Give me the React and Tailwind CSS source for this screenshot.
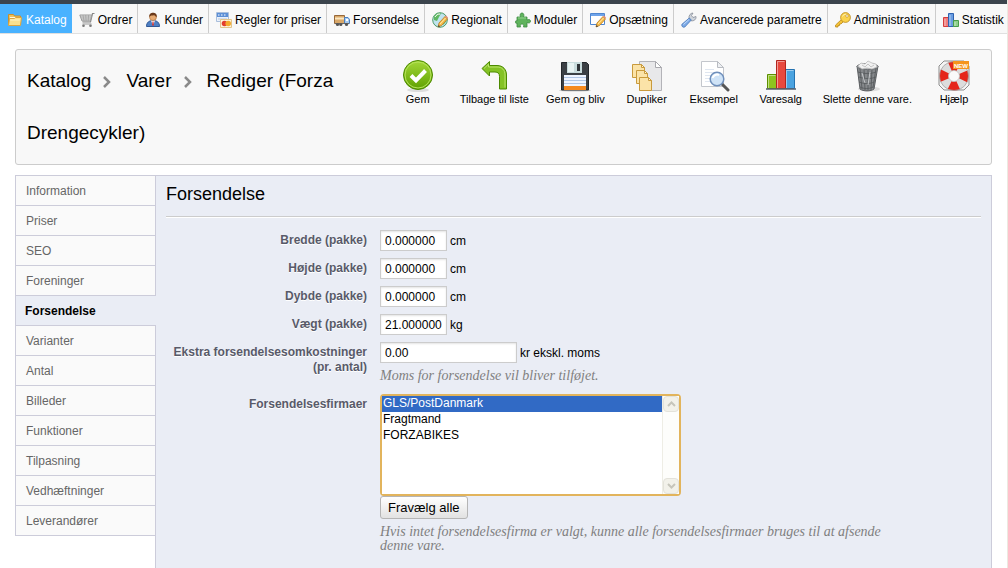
import React, { useState } from "react";

/* ---------- small menu icons (16px) ---------- */

const FolderIcon = () => (
  <svg width="16" height="16" viewBox="0 0 16 16" className="shrink-0">
    <path d="M1.5 12.5v-10h5l1 1.5h6v8.5z" fill="#f0c25a" stroke="#c98f2b" />
    <path d="M3 5h10v3H3z" fill="#fff8dc" />
    <path d="M1.5 13.5l1-7h5l1-1h6l-1 8z" fill="#fbe08e" stroke="#d9a441" />
    <path d="M3.2 8h9.6" stroke="#fff4c8" />
  </svg>
);

const CartIcon = () => (
  <svg width="16" height="16" viewBox="0 0 16 16" className="shrink-0">
    <path d="M15.5 1.5h-2l-2 8.5h-8" fill="none" stroke="#888" strokeWidth="1.2" />
    <path d="M.8 3h12l-1.5 6H3z" fill="#dedede" stroke="#999" />
    <path d="M2 5h10M2.6 7h9M4 3l1 6M6.7 3l.4 6M9.6 3l-.4 6" stroke="#a0a0a0" strokeWidth=".8" />
    <path d="M3.5 12h9" stroke="#999" />
    <circle cx="4.5" cy="13.8" r="1.3" fill="#777" />
    <circle cx="11.5" cy="13.8" r="1.3" fill="#777" />
  </svg>
);

const UserIcon = () => (
  <svg width="16" height="16" viewBox="0 0 16 16" className="shrink-0">
    <path d="M1.5 14.5c0-4 2.5-6 6.5-6s6.5 2 6.5 6z" fill="#4f80c4" stroke="#2f5796" />
    <path d="M6 8.5l2 5 2-5z" fill="#fff" />
    <path d="M7.5 9.500h1l.5 4h-2z" fill="#c33" />
    <circle cx="8" cy="5" r="3.5" fill="#e7ab73" stroke="#a86a35" strokeWidth=".6" />
    <path d="M4.300 5C4 2 6 .700 8 .700s4.200 1.300 3.700 4.300C10.500 4.800 10 3.500 9 3.300 7 3.500 5.500 3.500 4.300 5z" fill="#6b3a1b" />
  </svg>
);

const PriceRulesIcon = () => (
  <svg width="16" height="16" viewBox="0 0 16 16" className="shrink-0">
    <path d="M.5.5h12v9H.5z" fill="#e9f0fa" stroke="#a9bedb" />
    <path d="M1 1h11v4H1z" fill="#5c8fd6" />
    <path d="M2 3h1.500M5 3h1.500M8 3h1.500" stroke="#fff" />
    <path d="M2 7h9" stroke="#b7c7dd" />
    <path d="M4.500 7.500h11v8h-11z" fill="#fdf4dd" stroke="#e2c48b" />
    <circle cx="8.500" cy="11.500" r="2.800" fill="#e33d2e" />
    <circle cx="12.200" cy="11.500" r="2.800" fill="#f4ab2d" />
  </svg>
);

const TruckIcon = () => (
  <svg width="16" height="16" viewBox="0 0 16 16" className="shrink-0">
    <path d="M.5 3.500h10v8H.5z" fill="#d9a869" stroke="#96683a" />
    <path d="M1 6.500h9" stroke="#fbe6c0" strokeWidth="2" />
    <path d="M10.500 5.500h3.500l1.500 2v4h-5z" fill="#a9cbee" stroke="#4a7fc0" />
    <path d="M12 7h2v2h-2z" fill="#fff" />
    <path d="M1 11.500h14" stroke="#666" />
    <circle cx="3.500" cy="12.500" r="1.600" fill="#555" />
    <circle cx="6.800" cy="12.500" r="1.600" fill="#555" />
    <circle cx="12.500" cy="12.500" r="1.600" fill="#555" />
  </svg>
);

const Pencil = () => (
  <g>
    <path d="M6 15l1-4 6-6.500 2.500 2.500-6 6.500z" fill="#f7bd4c" stroke="#b9781d" strokeWidth=".8" />
    <path d="M8 12l5.500-6" stroke="#ffe7a6" />
    <path d="M13 4.500l1-1 2 2-.8 1.200z" fill="#e78d7c" />
    <path d="M6 15l.6-2 1.500 1.400z" fill="#444" />
  </g>
);

const GlobeIcon = () => (
  <svg width="16" height="16" viewBox="0 0 16 16" className="shrink-0">
    <circle cx="8" cy="8" r="7.300" fill="#bfe3ee" stroke="#4d9a68" />
    <path d="M2 4c2-2.500 5-3.500 7-2.500L7 5 5 9l-3-1zM9 9l5-4c1 3 0 6-3 8z" fill="#5fb862" />
    <path d="M3 5c1-2 3-3 5-3" fill="none" stroke="#fff" />
    <Pencil />
  </svg>
);

const PuzzleIcon = () => (
  <svg width="16" height="16" viewBox="0 0 16 16" className="shrink-0">
    <path
      d="M2 5h3.500C4.500 2.500 5.500 1 7 1s2.500 1.500 1.500 4H12v3c2-1 3.500-.3 3.500 1.200S14 11.500 12 10.500V15H8.500c.8-2-.2-3-1.500-3s-2.300 1-1.500 3H2v-4c-1 .6-1.700 0-1.700-1S1 8.500 2 9z"
      fill="#5fb35c"
      stroke="#3c8a41"
      strokeWidth=".8"
    />
    <path d="M3 6h8" stroke="#96d590" />
  </svg>
);

const PreferencesIcon = () => (
  <svg width="16" height="16" viewBox="0 0 16 16" className="shrink-0">
    <path d="M.5 1.500h14v11H.5z" fill="#fff" stroke="#4f86d0" />
    <path d="M1 2h13v2H1z" fill="#6ea3ea" />
    <Pencil />
  </svg>
);

const WrenchIcon = () => (
  <svg width="16" height="16" viewBox="0 0 16 16" className="shrink-0">
    <path d="M8 6.500c-.5-3 1.500-5.500 4-5.500l-1.500 2.500 1.500 2 3-1c.5 2.500-2 5-5 4.200z" fill="#cfd4db" stroke="#868d98" strokeWidth=".8" />
    <path d="M8.300 6l2 2-6.500 7c-1.500 1-3.800-.8-2.800-2.800z" fill="#7ba9e6" stroke="#4676b8" strokeWidth=".8" />
    <path d="M2.500 12.500l5.500-5" stroke="#c4dcfa" />
  </svg>
);

const KeyIcon = () => (
  <svg width="16" height="16" viewBox="0 0 16 16" className="shrink-0">
    <path d="M7 7l2 2-3 3H4.500v1.500H3V15H.6v-2z" fill="#f5c437" stroke="#b98516" strokeWidth=".8" />
    <circle cx="10.500" cy="5.500" r="4.900" fill="#fbd34d" stroke="#b98516" strokeWidth=".8" />
    <path d="M7.500 4.500c.7-2 2.500-2.500 4-2" fill="none" stroke="#fff2b5" />
    <circle cx="12" cy="4" r="1.300" fill="#fff" stroke="#b98516" strokeWidth=".6" />
  </svg>
);

const StatsIcon = () => (
  <svg width="16" height="16" viewBox="0 0 16 16" className="shrink-0">
    <path d="M.5 5.500h5v9h-5z" fill="#f07d7d" stroke="#d53b3b" />
    <path d="M5.500 1.500h5v13h-5z" fill="#6a9de2" stroke="#2f62b0" />
    <path d="M10.500 8.500h5v6h-5z" fill="#8dcf8a" stroke="#4a9d4a" />
    <path d="M2 7v7M7 3v11M12 10v4" stroke="#fff" strokeOpacity=".5" />
  </svg>
);

/* ---------- toolbar icons (32px) ---------- */

const SaveIcon = () => (
  <svg width="32" height="32" viewBox="0 0 32 32">
    <defs>
      <linearGradient id="save" x1="0" y1="0" x2="0" y2="1">
        <stop offset="0" stopColor="#a3d839" />
        <stop offset="1" stopColor="#5fa000" />
      </linearGradient>
    </defs>
    <ellipse cx="16" cy="30" rx="11" ry="2" fill="#ddd" />
    <circle cx="16" cy="15" r="14.500" fill="url(#save)" stroke="#4c8a00" />
    <circle cx="16" cy="15" r="13" fill="none" stroke="#b6e25c" />
    <path d="M9 15.500l5 5 9.500-10" fill="none" stroke="#fff" strokeWidth="4" />
  </svg>
);

const BackIcon = () => (
  <svg width="32" height="32" viewBox="0 0 32 32">
    <path
      d="M4 8.500l7.500-7v4H19c6 0 9.500 4 9.500 9.500V29h-7V16.500c0-3-1.500-4.500-4.500-4.500h-5.500v4z"
      fill="#84c225"
      stroke="#4c8a00"
      strokeLinejoin="round"
    />
    <path d="M6 8.500l4.500-4.300V7H19c5 0 8 3 8 8v12.500" fill="none" stroke="#b9e36a" />
  </svg>
);

const FloppyIcon = () => (
  <svg width="32" height="32" viewBox="0 0 32 32">
    <ellipse cx="16" cy="30.500" rx="16" ry="1" fill="#ccc" />
    <path d="M2.500 2.500h25l2 2V30h-27z" fill="#3b4045" stroke="#23272b" />
    <path d="M8 2h15v11H8z" fill="#c9dcdd" />
    <path d="M9 3h6v9H9z" fill="#e8f3f3" />
    <path d="M18 4h3v7h-3z" fill="#2f3438" />
    <path d="M5 15h22v11H5z" fill="#eef4ff" />
    <path d="M5 17.500h22M5 20.500h22M5 23.500h22" stroke="#afc6e6" />
    <path d="M5 26h22v4H5z" fill="#f58a1f" />
  </svg>
);

const DuplicateIcon = () => (
  <svg width="32" height="32" viewBox="0 0 32 32">
    <path d="M8.500 1.500h16l6 6v23h-22z" fill="#e8e8ea" stroke="#b3b3b8" />
    <path d="M24.500 1.500v6h6z" fill="#fff" stroke="#a8a8ad" />
    <g fill="#fbe3a8" stroke="#c99a3c">
      <path d="M1.500 4.500h9l3 3v10h-12z" />
      <path d="M5.500 10.500h8l3 3v10h-11z" />
      <path d="M8.500 17.500h9l3 3v10h-12z" />
    </g>
    <g fill="#fff7dd" stroke="#c99a3c">
      <path d="M10.500 4.500v3h3z" />
      <path d="M13.500 10.500v3h3z" />
      <path d="M17.500 17.500v3h3z" />
    </g>
  </svg>
);

const PreviewIcon = () => (
  <svg width="32" height="32" viewBox="0 0 32 32">
    <path d="M3.500 1.500h16l6 6v19h-22z" fill="#fff" stroke="#c3c6cc" />
    <path d="M19.500 1.500v6h6z" fill="#eef0f3" stroke="#b9bcc2" />
    <path d="M7 9.500h9M7 12.500h14M7 15.500h6M7 18.500h5M7 21.500h6" stroke="#dfe6f0" />
    <path d="M24 24l6 6" stroke="#555" strokeWidth="3" strokeLinecap="round" />
    <circle cx="19" cy="19" r="6.800" fill="#cfe3f7" stroke="#6f8fbb" strokeWidth="1.500" />
    <path d="M14.500 18c1-3 4-4 6.500-3" fill="none" stroke="#fff" strokeWidth="2" />
  </svg>
);

const SalesIcon = () => (
  <svg width="32" height="32" viewBox="0 0 32 32">
    <path d="M2.500 14.500h9v14h-9z" fill="#8fc31f" stroke="#5b8f00" />
    <path d="M20.500 9.500h9v19h-9z" fill="#4ba3e0" stroke="#2472b0" />
    <path d="M11.500.5h9v28h-9z" fill="#e8493f" stroke="#b3241d" />
    <path d="M3.500 28V15.500h7M12.500 28V1.500h7M21.500 28V10.500h7" fill="none" stroke="#fff" strokeOpacity=".45" />
    <path d="M1 29h30" stroke="#56606c" strokeWidth="1.500" />
  </svg>
);

const TrashIcon = () => (
  <svg width="32" height="32" viewBox="0 0 32 32">
    <ellipse cx="18" cy="29" rx="11" ry="2.500" fill="#ddd" />
    <path d="M6 6l3 23c3 2.500 11 2.500 14 0l4-23z" fill="#85888b" stroke="#5b5e61" />
    <path
      d="M9 9l2 20M13 9l1 21M17 10v20M21 9l-1 21M25 8l-3 20M7 12c6 2 13 2 18 0M8 17c6 2 12 2 17 0M8 22c5 2 11 2 15 0M9 27c4 2 9 2 13 0"
      fill="none"
      stroke="#54585b"
      strokeWidth=".8"
    />
    <path d="M11 13l3 10M19 12l-2 13" stroke="#c4c7c9" />
    <ellipse cx="16.500" cy="6.500" rx="10.500" ry="3" fill="#b8babc" stroke="#6c6f72" />
    <path d="M7 6l3-3 4 1 3-3 4 2 4 1 1 3-5 2-5-1-5 1z" fill="#f1f1f1" stroke="#b5b5b5" strokeWidth=".7" />
    <path d="M11 5l3 2 3-3 3 3 3-2" fill="none" stroke="#c4c4c4" />
  </svg>
);

const HelpIcon = () => (
  <svg width="32" height="32" viewBox="0 0 32 32">
    <path d="M6 1h20l5 5v19l-5 5H6l-5-5V6z" fill="#f4f4f4" stroke="#8d8d8d" />
    <circle cx="16" cy="16" r="10" fill="none" stroke="#dcdcdc" strokeWidth="9" />
    <circle cx="16" cy="16" r="10" fill="none" stroke="#e5261b" strokeWidth="9" strokeDasharray="8.700 7.008" strokeDashoffset="4.350" />
    <circle cx="16" cy="16" r="14.500" fill="none" stroke="#9b9b9b" strokeWidth=".7" />
    <circle cx="16" cy="16" r="5.500" fill="#fafafa" stroke="#b4b4b4" strokeWidth=".7" />
    <path d="M15 1h16v8H15z" fill="#f5941d" />
    <text x="16" y="7.500" fontSize="6" fontWeight="bold" fill="#fff" fontFamily="Liberation Sans, Arial, sans-serif">
      NEW
    </text>
  </svg>
);

const menu = [
  { label: "Katalog", icon: FolderIcon, active: true },
  { label: "Ordrer", icon: CartIcon },
  { label: "Kunder", icon: UserIcon },
  { label: "Regler for priser", icon: PriceRulesIcon },
  { label: "Forsendelse", icon: TruckIcon },
  { label: "Regionalt", icon: GlobeIcon },
  { label: "Moduler", icon: PuzzleIcon },
  { label: "Opsætning", icon: PreferencesIcon },
  { label: "Avancerede parametre", icon: WrenchIcon },
  { label: "Administration", icon: KeyIcon },
  { label: "Statistik", icon: StatsIcon },
];

const toolbar = [
  { label: "Gem", icon: SaveIcon },
  { label: "Tilbage til liste", icon: BackIcon },
  { label: "Gem og bliv", icon: FloppyIcon },
  { label: "Dupliker", icon: DuplicateIcon },
  { label: "Eksempel", icon: PreviewIcon },
  { label: "Varesalg", icon: SalesIcon },
  { label: "Slette denne vare.", icon: TrashIcon },
  { label: "Hjælp", icon: HelpIcon },
];

const tabs = [
  "Information",
  "Priser",
  "SEO",
  "Foreninger",
  "Forsendelse",
  "Varianter",
  "Antal",
  "Billeder",
  "Funktioner",
  "Tilpasning",
  "Vedhæftninger",
  "Leverandører",
];

const dimensions = [
  { id: "width", label: "Bredde (pakke)", unit: "cm" },
  { id: "height", label: "Højde (pakke)", unit: "cm" },
  { id: "depth", label: "Dybde (pakke)", unit: "cm" },
  { id: "weight", label: "Vægt (pakke)", unit: "kg" },
];

const carriers = ["GLS/PostDanmark", "Fragtmand", "FORZABIKES"];

const Separator = () => (
  <svg width="8" height="12" viewBox="0 0 8 12" className="ml-3 mr-[15px] inline-block">
    <path d="M1 1l5 5-5 5" fill="none" stroke="#8a8a8a" strokeWidth="2.500" />
  </svg>
);

function FormRow({ id, label, children }) {
  return (
    <div className="grid grid-cols-[201px_1fr] gap-x-[13px]">
      <label
        htmlFor={id}
        className="pt-[3px] text-right font-bold leading-[15px] text-[#585a69] [text-shadow:0_1px_0_#fff]"
      >
        {label}
      </label>
      <div>{children}</div>
    </div>
  );
}

function TextInput({ className, ...props }) {
  return (
    <input
      type="text"
      className={`h-[21px] border border-[#ccc] bg-white px-1 shadow-[inset_0_1px_2px_#e4e4e4] outline-none ${className}`}
      {...props}
    />
  );
}

const Hint = ({ children }) => (
  <p className="mt-1.5 max-w-[510px] font-['Liberation_Serif',Georgia,serif] text-sm italic leading-[14px] text-[#7f7f7f]">
    {children}
  </p>
);

const ScrollArrow = ({ down }) => (
  <span className="flex h-4 w-4 items-center justify-center rounded-sm border border-[#e3e2da] bg-[#f2f1ea]">
    <svg width="9" height="6" viewBox="0 0 9 6">
      <path d={down ? "M1 1l3.500 3.500L8 1" : "M1 5l3.500-3.500L8 5"} fill="none" stroke="#c6c5bb" strokeWidth="2" />
    </svg>
  </span>
);

function App() {
  const [values, setValues] = useState({
    width: "0.000000",
    height: "0.000000",
    depth: "0.000000",
    weight: "21.000000",
    extraCost: "0.00",
  });
  const [selected, setSelected] = useState(["GLS/PostDanmark"]);

  const handleChange = (e) => {
    setValues({ ...values, [e.target.id]: e.target.value });
  };

  const handleCarriers = (e) => {
    setSelected(Array.from(e.target.selectedOptions, (option) => option.value));
  };

  return (
    <div className="flex min-h-screen flex-col overflow-hidden border-r border-[#ece9e0] bg-white font-['Liberation_Sans',Arial,sans-serif] text-xs text-black">
      <nav className="border-t-4 border-[#3b444d]">
        <ul className="flex h-[30px] overflow-hidden border-b border-[#e0e0e0] bg-[#f8f8f8]">
          {menu.map(({ label, icon: Icon, active }) => (
            <li key={label} className="shrink-0">
              <a
                href="#"
                className={
                  active
                    ? "flex h-full items-center gap-[3px] bg-[#49b2ff] pl-[7px] pr-[5px] pt-0.5 text-white"
                    : "flex h-full items-center gap-[3px] border-r border-[#ccc] pl-[7px] pr-[5px] pt-0.5"
                }
              >
                <Icon />
                {label}
              </a>
            </li>
          ))}
        </ul>
      </nav>

      <header className="mx-[15px] mt-[15px] flex items-start rounded-[3px] border border-[#ccc] bg-[#f8f8f8] py-[5px] pl-[11px] pr-3">
        <h1 className="min-w-0 flex-1 text-[19px] leading-[52px]">
          <span>Katalog</span>
          <Separator />
          <span>Varer</span>
          <Separator />
          <span>Rediger (Forza</span> <span>Drengecykler)</span>
        </h1>
        <ul className="mt-[5px] flex shrink-0 gap-[17px]">
          {toolbar.map(({ label, icon: Icon }) => (
            <li key={label} className="min-w-[50px]">
              <a href="#" className="flex flex-col items-center text-[11px] leading-[14px]">
                <Icon />
                {label}
              </a>
            </li>
          ))}
        </ul>
      </header>

      <main className="mx-[15px] mt-2.5 flex flex-1">
        <ul className="relative z-10 -mr-px w-[141px] shrink-0 self-start border-t border-[#ccccda]">
          {tabs.map((tab) => (
            <li key={tab}>
              <a
                href="#"
                className={
                  tab === "Forsendelse"
                    ? "flex h-[30px] items-center border-b border-l border-[#ccccda] bg-[#eaedf5] pl-[9px] font-bold"
                    : "flex h-[30px] items-center border-x border-b border-[#ccccda] bg-[#fafafa] pl-2.5 text-[#666]"
                }
              >
                {tab}
              </a>
            </li>
          ))}
        </ul>

        <section className="min-w-0 flex-1 border-x border-t border-[#ccccda] bg-[#eaedf5] px-2.5 pb-4 pt-1.5">
          <h2 className="border-b border-[#ccc] pb-2.5 text-lg leading-6 shadow-[0_1px_0_#fff]">Forsendelse</h2>

          <form className="mt-[13px] flex flex-col gap-[7px]">
            {dimensions.map(({ id, label, unit }) => (
              <FormRow key={id} id={id} label={label}>
                <div className="flex items-center gap-[3px]">
                  <TextInput id={id} value={values[id]} onChange={handleChange} className="w-[67px]" />
                  {unit}
                </div>
              </FormRow>
            ))}

            <FormRow id="extraCost" label="Ekstra forsendelsesomkostninger (pr. antal)">
              <div className="flex items-center gap-[3px]">
                <TextInput id="extraCost" value={values.extraCost} onChange={handleChange} className="w-[137px]" />
                kr ekskl. moms
              </div>
              <Hint>Moms for forsendelse vil bliver tilføjet.</Hint>
            </FormRow>

            <div className="pt-1">
              <FormRow id="carriers" label="Forsendelsesfirmaer">
                <div className="flex h-[102px] w-[301px] rounded-sm border-2 border-[#e2b45c] bg-white">
                  <select
                    id="carriers"
                    multiple
                    value={selected}
                    onChange={handleCarriers}
                    className="h-full min-w-0 flex-1 overflow-hidden bg-white outline-none"
                  >
                    {carriers.map((carrier) => (
                      <option
                        key={carrier}
                        value={carrier}
                        className="h-4 px-px py-0 leading-4 checked:bg-linear-to-r checked:from-[#316ac5] checked:to-[#316ac5] checked:[-webkit-text-fill-color:white]"
                      >
                        {carrier}
                      </option>
                    ))}
                  </select>
                  <div aria-hidden="true" className="flex flex-col justify-between border-l border-[#eeede5] bg-[#fdfdfb]">
                    <ScrollArrow />
                    <ScrollArrow down />
                  </div>
                </div>
                <button
                  type="button"
                  onClick={() => setSelected([])}
                  className="block h-[23px] rounded-[3px] border border-[#b5b5b5] bg-linear-to-b from-white to-[#e2e2e2] px-[7px] text-[13px] leading-[21px]"
                >
                  Fravælg alle
                </button>
                <Hint>
                  Hvis intet forsendelsesfirma er valgt, kunne alle forsendelsesfirmaer bruges til at afsende denne vare.
                </Hint>
              </FormRow>
            </div>
          </form>
        </section>
      </main>
    </div>
  );
}

export default App;
